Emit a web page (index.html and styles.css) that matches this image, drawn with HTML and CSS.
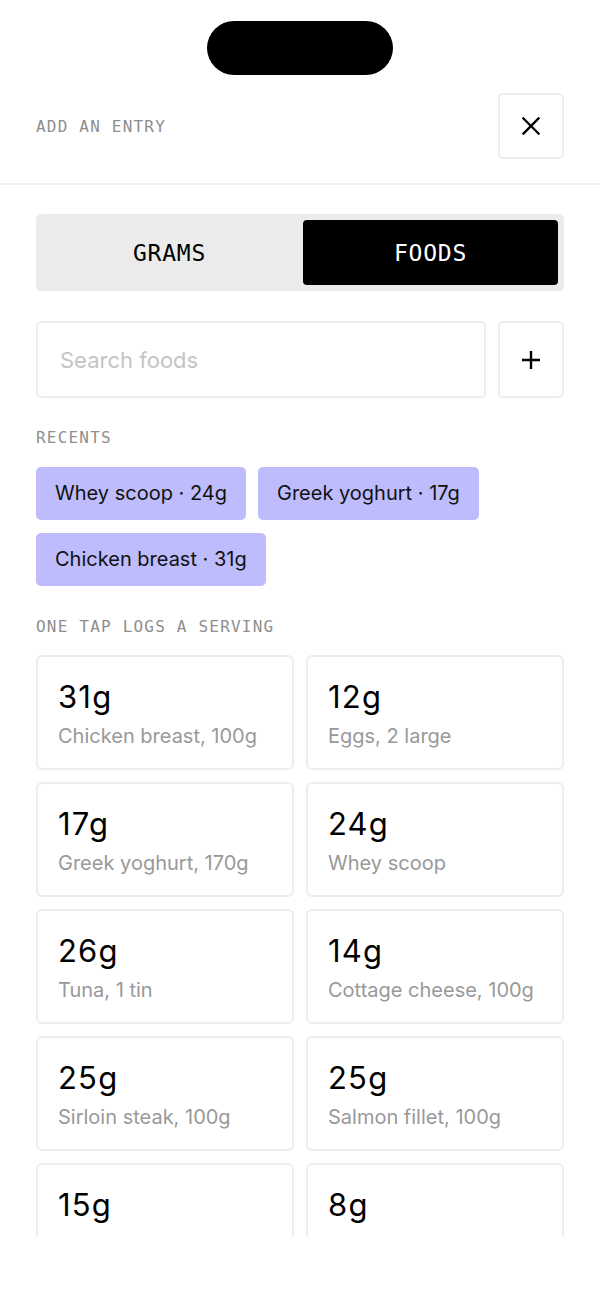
FILE: index.html
```html
<!DOCTYPE html>
<html lang="en">
<head>
    <meta charset="UTF-8">
    <meta name="viewport" content="width=device-width, initial-scale=1.0">
    <title>Add an entry</title>
    <link rel="stylesheet" href="styles.css">
</head>
<body>

    <div class="notch-bar">
        <div class="notch"></div>
    </div>

    <header class="sheet-header">
        <span class="label">ADD AN ENTRY</span>
        <button class="icon-btn" aria-label="Close">
            <svg width="24" height="24" viewBox="0 0 24 24" fill="none" stroke="#000" stroke-width="2.3" stroke-linecap="square">
                <path d="M4.5 4.5L19.5 19.5M19.5 4.5L4.5 19.5"/>
            </svg>
        </button>
    </header>

    <main class="sheet-body">
        <div class="segmented">
            <button class="seg">GRAMS</button>
            <button class="seg active">FOODS</button>
        </div>

        <div class="search-row">
            <input class="search" type="text" placeholder="Search foods">
            <button class="icon-btn" aria-label="Add food">
                <svg width="22" height="22" viewBox="0 0 22 22" fill="none" stroke="#000" stroke-width="2.4">
                    <path d="M11 2V20M2 11H20"/>
                </svg>
            </button>
        </div>

        <!-- Recents -->
        <p class="label section-label">RECENTS</p>
        <div class="chips">
            <button class="chip">Whey scoop · 24g</button>
            <button class="chip">Greek yoghurt · 17g</button>
            <button class="chip">Chicken breast · 31g</button>
        </div>

        <p class="label section-label">ONE TAP LOGS A SERVING</p>
        <div class="food-grid">
            <div class="food-card"><div class="grams">31g</div><div class="food-name">Chicken breast, 100g</div></div>
            <div class="food-card"><div class="grams">12g</div><div class="food-name">Eggs, 2 large</div></div>
            <div class="food-card"><div class="grams">17g</div><div class="food-name">Greek yoghurt, 170g</div></div>
            <div class="food-card"><div class="grams">24g</div><div class="food-name">Whey scoop</div></div>
            <div class="food-card"><div class="grams">26g</div><div class="food-name">Tuna, 1 tin</div></div>
            <div class="food-card"><div class="grams">14g</div><div class="food-name">Cottage cheese, 100g</div></div>
            <div class="food-card"><div class="grams">25g</div><div class="food-name">Sirloin steak, 100g</div></div>
            <div class="food-card"><div class="grams">25g</div><div class="food-name">Salmon fillet, 100g</div></div>
            <div class="food-card"><div class="grams">15g</div></div>
            <div class="food-card"><div class="grams">8g</div></div>
        </div>
    </main>

</body>
</html>
```

FILE: styles.css
```css
/* Reset */
* {
    margin: 0;
    padding: 0;
    box-sizing: border-box;
}

body {
    font-family: 'Inter', 'Roboto', sans-serif;
    background-color: #fff;
    color: #000;
    width: 600px;
}

button, input {
    font-family: inherit;
    color: inherit;
}

.notch-bar {
    height: 93px;
    padding-top: 21px;
    display: flex;
    justify-content: center;
}

.notch {
    width: 186px;
    height: 54px;
    background-color: #000;
    border-radius: 27px;
}

.label {
    font-family: 'DejaVu Sans Mono', monospace;
    font-size: 16px;
    letter-spacing: 1.2px;
    color: #8e8e8e;
}

.sheet-header {
    display: flex;
    align-items: center;
    justify-content: space-between;
    padding: 0 36px 24px 36px;
    border-bottom: 2px solid #efefef;
}

.icon-btn {
    width: 66px;
    height: 66px;
    flex-shrink: 0;
    display: flex;
    align-items: center;
    justify-content: center;
    background-color: #fff;
    border: 2px solid #eeeeee;
    border-radius: 5px;
}

.sheet-body {
    height: 1051px;
    overflow: hidden;
    padding: 29px 36px 0 36px;
}

/* Segmented control */
.segmented {
    display: grid;
    grid-template-columns: 1fr 1fr;
    gap: 6px;
    padding: 6px;
    background-color: #ebebeb;
    border-radius: 5px;
}

.seg {
    height: 65px;
    border: none;
    background: transparent;
    border-radius: 4px;
    font-family: 'DejaVu Sans Mono', monospace;
    font-size: 23px;
    letter-spacing: 0.8px;
}

.seg.active {
    background-color: #000;
    color: #fff;
}

/* Search */
.search-row {
    display: flex;
    gap: 12px;
    margin-top: 30px;
}

.search {
    flex: 1;
    height: 77px;
    border: 2px solid #eeeeee;
    border-radius: 5px;
    padding: 0 22px;
    font-size: 22px;
    outline: none;
}

.search::placeholder {
    color: #c4c4c4;
}

.search-row .icon-btn {
    height: 77px;
}

.section-label {
    margin-top: 31px;
    line-height: 18px;
}

/* Recents */
.chips {
    display: flex;
    flex-wrap: wrap;
    gap: 13px 12px;
    margin-top: 20px;
}

.chip {
    border: none;
    background-color: #bebcfd;
    border-radius: 5px;
    padding: 15px 19px;
    font-size: 20px;
    line-height: 23px;
    color: #111;
}

.chips + .section-label {
    margin-top: 32px;
}

/* Food grid */
.food-grid {
    display: grid;
    grid-template-columns: 1fr 1fr;
    gap: 12px;
    margin-top: 19px;
}

.food-card {
    border: 2px solid #ededed;
    border-radius: 6px;
    padding: 22px 20px 0 20px;
    height: 115px;
}

.grams {
    font-size: 31px;
    line-height: 36px;
    letter-spacing: 1.2px;
}

.food-name {
    margin-top: 10px;
    font-size: 20px;
    line-height: 23px;
    color: #999;
}
```
